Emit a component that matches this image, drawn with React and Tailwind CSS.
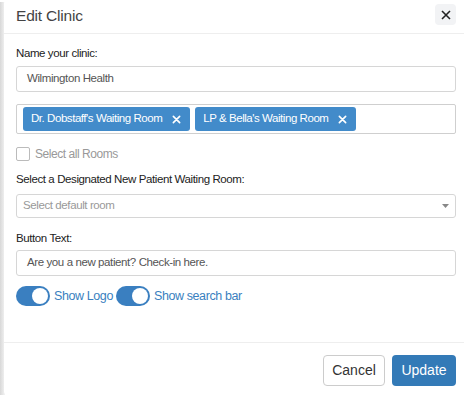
import React from "react";

function Toggle({ label }) {
  return (
    <div className="flex items-center">
      <div className="relative w-[34px] h-[20px] rounded-full bg-[#3a7fc0]">
        <div className="absolute right-[2px] top-[2px] w-[16px] h-[16px] rounded-full bg-white" />
      </div>
      <span className="ml-[4px] text-[12.5px] text-[#3a7fc0] tracking-[-0.4px]">{label}</span>
    </div>
  );
}

function Tag({ label }) {
  return (
    <div className="flex items-center h-[24px] pl-[8px] pr-[9px] rounded-[3px] bg-[#428bca] text-white text-[11.5px] tracking-[-0.45px]">
      <span>{label}</span>
      <svg className="ml-[10px]" width="9" height="9" viewBox="0 0 10 10">
        <path d="M1.5 1.5 L8.5 8.5 M8.5 1.5 L1.5 8.5" stroke="white" strokeWidth="1.8" strokeLinecap="round" />
      </svg>
    </div>
  );
}

export default function App() {
  return (
    <div className="w-[464px] h-[395px] bg-white overflow-hidden" style={{ fontFamily: "'Liberation Sans', Arial, sans-serif" }}>
      <div className="relative w-full h-full">
        <div className="absolute left-0 top-[2px] bottom-0 w-[5px] bg-gradient-to-r from-[#d8d8d8] to-[#f4f4f4]" />
        <div className="relative ml-[4px] h-[395px] bg-white rounded-l-[4px] flex flex-col">
          <div className="h-[34px] flex items-center justify-between pl-[12px] pr-[8px] border-b border-[#eeeeee]">
            <span className="text-[15.5px] text-[#444] mt-[-2px] tracking-[-0.2px]">Edit Clinic</span>
            <div className="w-[21px] h-[21px] rounded-[4px] bg-[#f2f3f5] flex items-center justify-center mt-[-4px]">
              <svg width="10" height="10" viewBox="0 0 10 10">
                <path d="M1 1 L9 9 M9 1 L1 9" stroke="#222" strokeWidth="1.6" />
              </svg>
            </div>
          </div>
          <div className="px-[12px] pr-[8px] flex flex-col h-[308px]">
            <div className="text-[11.5px] text-[#222] mt-[12px] leading-[15px] tracking-[-0.4px]">Name your clinic:</div>
            <div className="mt-[5px] h-[26px] border border-[#d6d6d6] rounded-[3px] flex items-center px-[10px] text-[11.5px] text-[#555] tracking-[-0.4px]">Wilmington Health</div>
            <div className="mt-[12px] h-[30px] border border-[#cfcfcf] rounded-[2px] flex items-center gap-[5px] px-[6px]">
              <Tag label="Dr. Dobstaff's Waiting Room" />
              <Tag label="LP & Bella's Waiting Room" />
            </div>
            <div className="mt-[11px] flex items-center">
              <div className="w-[14px] h-[14px] border border-[#bbb] rounded-[2px] bg-white" />
              <span className="ml-[5px] text-[12px] text-[#999] tracking-[-0.45px]">Select all Rooms</span>
            </div>
            <div className="text-[11.5px] text-[#222] mt-[9px] leading-[15px] tracking-[-0.4px]">Select a Designated New Patient Waiting Room:</div>
            <div className="mt-[7px] h-[24px] border border-[#d6d6d6] rounded-[3px] flex items-center justify-between pl-[6px] pr-[6px] text-[11.5px] text-[#999] tracking-[-0.4px]">
              <span>Select default room</span>
              <svg width="7" height="5" viewBox="0 0 7 5"><path d="M0 0 L7 0 L3.5 4 Z" fill="#888" /></svg>
            </div>
            <div className="text-[11.5px] text-[#222] mt-[13px] leading-[15px] tracking-[-0.4px]">Button Text:</div>
            <div className="mt-[4px] h-[26px] border border-[#d6d6d6] rounded-[3px] flex items-center px-[10px] text-[11.5px] text-[#555] tracking-[-0.4px]">Are you a new patient? Check-in here.</div>
            <div className="mt-[10px] flex items-center gap-[3px]">
              <Toggle label="Show Logo" />
              <Toggle label="Show search bar" />
            </div>
          </div>
          <div className="border-t border-[#eeeeee] flex-1 flex justify-end items-start pt-[12px] pr-[8px] gap-[7px]">
            <button className="h-[31px] w-[62px] border border-[#ccc] rounded-[4px] bg-white text-[14px] text-[#333]">Cancel</button>
            <button className="h-[31px] w-[64px] rounded-[4px] bg-[#337ab7] text-[14px] text-white">Update</button>
          </div>
        </div>
      </div>
    </div>
  );
}
